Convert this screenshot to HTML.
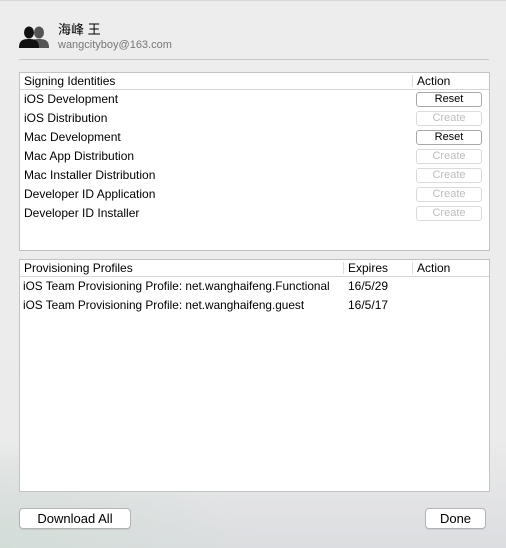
<html><head><style>
body{margin:0;width:506px;height:548px;overflow:hidden;font-family:"Liberation Sans","Noto Sans CJK SC",sans-serif;font-size:12px;color:#000;
background:radial-gradient(ellipse 260px 110px at 0px 548px,#d3ddd8,rgba(220,222,226,0) 100%),linear-gradient(180deg,#ededed 0,#ebebeb 440px,#dcdde0 548px);position:relative}
.abs{position:absolute}
.tbl{position:absolute;left:19px;width:469px;background:#fff;border:1px solid #c3c3c3}
.hdr{height:16px;border-bottom:1px solid #d6d6d6;position:relative}
.t{position:absolute;white-space:nowrap;line-height:14px}
.vd{position:absolute;top:2px;width:1px;height:12px;background:#dcdcdc}
.btn{position:absolute;left:396px;width:64px;height:13px;border:1px solid #a8a8a8;border-radius:3px;background:#fff;text-align:center;line-height:13px;font-size:11px}
.btn.d{color:#bdbdbd;border-color:#dadada}
.bb{position:absolute;height:19px;border:1px solid #b3b3b3;border-radius:4px;background:#fff;text-align:center;line-height:19px;font-size:13px;box-shadow:0 1px 0 rgba(0,0,0,.08)}
</style></head><body>
<div class="abs" style="left:0;top:0;width:506px;height:1px;background:#d8d8d8"></div>
<svg class="abs" style="left:19px;top:26px" width="32" height="22" viewBox="0 0 32 22">
<g fill="#555"><ellipse cx="20" cy="6.5" rx="5" ry="6"/><path d="M10 22 C10 15 13 13 20 13 C27 13 30 15 30 22Z"/></g>
<g fill="#111"><ellipse cx="10" cy="6.5" rx="5" ry="6"/><path d="M0 22 C0 15 3 13 10 13 C17 13 20 15 20 22Z"/></g></svg>
<div class="t" style="left:58px;top:23px;font-size:13px">海峰 王</div>
<div class="t" style="left:58px;top:38px;color:#777;font-size:11px">wangcityboy@163.com</div>
<div class="abs" style="left:19px;top:59px;width:470px;height:1px;background:#c9c9c9"></div>

<div class="tbl" style="top:72px;height:177px">
<div class="hdr"><div class="t" style="left:4px;top:1px">Signing Identities</div><div class="vd" style="left:392px"></div><div class="t" style="left:397px;top:1px">Action</div></div>
<div class="t" style="left:4px;top:19px">iOS Development</div><div class="btn" style="top:19px">Reset</div>
<div class="t" style="left:4px;top:38px">iOS Distribution</div><div class="btn d" style="top:38px">Create</div>
<div class="t" style="left:4px;top:57px">Mac Development</div><div class="btn" style="top:57px">Reset</div>
<div class="t" style="left:4px;top:76px">Mac App Distribution</div><div class="btn d" style="top:76px">Create</div>
<div class="t" style="left:4px;top:95px">Mac Installer Distribution</div><div class="btn d" style="top:95px">Create</div>
<div class="t" style="left:4px;top:114px">Developer ID Application</div><div class="btn d" style="top:114px">Create</div>
<div class="t" style="left:4px;top:133px">Developer ID Installer</div><div class="btn d" style="top:133px">Create</div>
</div>

<div class="tbl" style="top:259px;height:231px">
<div class="hdr"><div class="t" style="left:4px;top:1px">Provisioning Profiles</div><div class="vd" style="left:323px"></div><div class="t" style="left:328px;top:1px">Expires</div><div class="vd" style="left:392px"></div><div class="t" style="left:397px;top:1px">Action</div></div>
<div class="t" style="left:3px;top:19px;font-size:11.8px">iOS Team Provisioning Profile: net.wanghaifeng.Functional</div><div class="t" style="left:328px;top:19px">16/5/29</div>
<div class="t" style="left:3px;top:38px;font-size:11.8px">iOS Team Provisioning Profile: net.wanghaifeng.guest</div><div class="t" style="left:328px;top:38px">16/5/17</div>
</div>

<div class="bb" style="left:19px;top:508px;width:110px">Download All</div>
<div class="bb" style="left:425px;top:508px;width:59px">Done</div>
</body></html>
